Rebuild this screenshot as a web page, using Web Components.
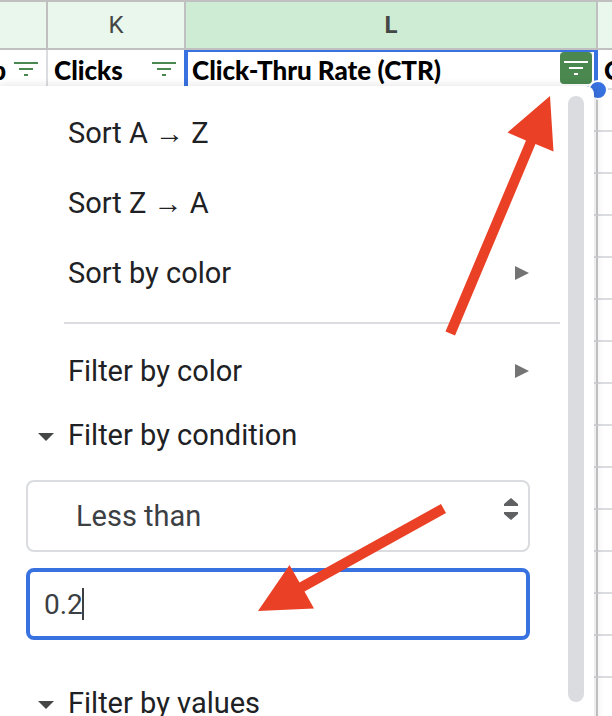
<!DOCTYPE html>
<html lang="en">
<head>
<meta charset="utf-8">
<title>Filter menu</title>
<style>
  body {
    margin: 0;
    background: #fff;
    font-family: Roboto, "Liberation Sans", sans-serif;
  }
  .arrow { font-family: "Liberation Serif", serif; }
</style>
</head>
<body>
<sheet-view>
  <filter-menu slot="menu">
    <menu-item>Sort A <span class="arrow">→</span> Z</menu-item>
    <menu-item>Sort Z <span class="arrow">→</span> A</menu-item>
    <menu-item submenu>Sort by color</menu-item>
    <menu-divider></menu-divider>
    <menu-item submenu>Filter by color</menu-item>
    <menu-section label="Filter by condition">
      <condition-select value="Less than"></condition-select>
      <condition-input value="0.2"></condition-input>
    </menu-section>
    <menu-section label="Filter by values"></menu-section>
  </filter-menu>
  <callout-arrows slot="callouts"></callout-arrows>
</sheet-view>

<script>
class FilterIcon extends HTMLElement {
  constructor() {
    super();
    this.attachShadow({ mode: 'open' });
  }

  connectedCallback() {
    this.shadowRoot.innerHTML = `
      <style>
        :host { display: block; color: #4a884f; }
        :host([active]) { color: #fff; }
        button {
          display: flex;
          align-items: center;
          justify-content: center;
          width: 32px;
          height: 32px;
          padding: 0;
          border: 0;
          border-radius: 4px;
          background: none;
          color: inherit;
        }
        :host([active]) button { background: #4a884f; }
      </style>
      <button type="button" aria-label="Filter column">
        <svg width="24" height="14" viewBox="0 0 24 14" fill="currentColor" shape-rendering="crispEdges">
          <rect width="24" height="2"/>
          <rect x="5" y="6" width="14" height="2"/>
          <rect x="10" y="12" width="4" height="2"/>
        </svg>
      </button>
    `;
  }
}

class SheetView extends HTMLElement {
  constructor() {
    super();
    this.attachShadow({ mode: 'open' });
  }

  connectedCallback() {
    const rows = Array.from({ length: 16 }, () => '<tr><td></td><td></td><td></td><td></td></tr>').join('');
    this.shadowRoot.innerHTML = `
      <style>
        :host {
          display: block;
          position: relative;
          height: 100vh;
          overflow: hidden;
        }
        table {
          width: 100%;
          table-layout: fixed;
          border-collapse: separate;
          border-spacing: 0;
          border-top: 2px solid #c0c0c0;
        }
        .j { width: 48px; }
        .k { width: 138px; }
        .m { width: 14px; }
        th, td {
          box-sizing: border-box;
          height: 42px;
          padding: 0;
          border-right: 2px solid #dadce0;
          border-bottom: 2px solid #dadce0;
        }
        td:nth-child(3) { border-right-color: #c8c8c8; }
        thead th {
          height: 48px;
          background: #e9f7ed;
          border-color: #c0c0c0;
          color: #444746;
          font-size: 24px;
          font-weight: 400;
        }
        thead th.current {
          background: #ceecd3;
          font-weight: 700;
        }
        tr > :last-child { border-right: 0; }
        .names td {
          position: relative;
          height: 40px;
        }
        .name {
          display: flex;
          align-items: center;
          justify-content: space-between;
          box-sizing: border-box;
          height: 38px;
          padding: 0 4px 0 6px;
          overflow: hidden;
          color: #000;
          font: 900 26px/32px Lato, "Liberation Sans", sans-serif;
          white-space: nowrap;
        }
        .name span { padding-top: 2px; }
        .cut {
          justify-content: flex-end;
          gap: 4px;
          padding-left: 0;
        }
        filter-icon[active] { padding-bottom: 2px; }
        td.current::after {
          content: "";
          position: absolute;
          inset: 0 -2px 0 -2px;
          border: solid #3871e0;
          border-width: 2px 4px;
          pointer-events: none;
        }
        .handle {
          position: absolute;
          z-index: 1;
          right: -12px;
          bottom: -12px;
          width: 16px;
          height: 16px;
          border: 2px solid #fff;
          border-radius: 50%;
          background: #3871e0;
        }
        ::slotted([slot="menu"]) {
          position: absolute;
          z-index: 2;
          top: 86px;
          left: 0;
          right: 18px;
        }
        ::slotted([slot="callouts"]) {
          position: absolute;
          z-index: 3;
          top: 96px;
          right: 58px;
        }
      </style>
      <table>
        <colgroup><col class="j"><col class="k"><col><col class="m"></colgroup>
        <thead>
          <tr><th></th><th>K</th><th class="current">L</th><th></th></tr>
        </thead>
        <tbody>
          <tr class="names">
            <td><div class="name cut"><span>p</span><filter-icon></filter-icon></div></td>
            <td><div class="name"><span>Clicks</span><filter-icon></filter-icon></div></td>
            <td class="current">
              <div class="name"><span>Click-Thru Rate (CTR)</span><filter-icon active></filter-icon></div>
              <span class="handle"></span>
            </td>
            <td><div class="name"><span>C</span></div></td>
          </tr>
          ${rows}
        </tbody>
      </table>
      <slot name="menu"></slot>
      <slot name="callouts"></slot>
    `;
  }
}

class FilterMenu extends HTMLElement {
  constructor() {
    super();
    this.attachShadow({ mode: 'open' });
  }

  connectedCallback() {
    this.shadowRoot.innerHTML = `
      <style>
        :host {
          display: grid;
          grid-template-columns: 1fr 16px;
          gap: 8px;
          box-sizing: border-box;
          padding-right: 10px;
          border-radius: 0 8px 0 0;
          background: #fff;
          box-shadow: 0 2px 10px 2px rgba(0, 0, 0, 0.12);
        }
        .items { padding-top: 12px; }
        .thumb {
          margin: 10px 0 30px;
          border-radius: 8px;
          background: #dadce0;
        }
      </style>
      <div class="items"><slot></slot></div>
      <div class="thumb"></div>
    `;
  }
}

class MenuItem extends HTMLElement {
  constructor() {
    super();
    this.attachShadow({ mode: 'open' });
  }

  connectedCallback() {
    const arrow = this.hasAttribute('submenu')
      ? '<svg width="14" height="14" viewBox="0 0 14 14"><path d="M0 0L14 7L0 14Z" fill="#747474"/></svg>'
      : '';
    this.shadowRoot.innerHTML = `
      <style>
        :host { display: block; }
        button {
          display: flex;
          align-items: center;
          justify-content: space-between;
          width: 100%;
          height: 70px;
          padding: 0 31px 0 68px;
          border: 0;
          background: none;
          color: #202124;
          font: 400 29px/32px Roboto, "Liberation Sans", sans-serif;
        }
      </style>
      <button type="button"><span><slot></slot></span>${arrow}</button>
    `;
  }
}

class MenuDivider extends HTMLElement {
  constructor() {
    super();
    this.attachShadow({ mode: 'open' });
  }

  connectedCallback() {
    this.shadowRoot.innerHTML = `
      <style>
        :host { display: block; padding: 14px 0 12px 64px; }
        hr { height: 2px; margin: 0; border: 0; background: #dadce0; }
      </style>
      <hr>
    `;
  }
}

class MenuSection extends HTMLElement {
  constructor() {
    super();
    this.attachShadow({ mode: 'open' });
  }

  connectedCallback() {
    const label = this.getAttribute('label') || '';
    this.shadowRoot.innerHTML = `
      <style>
        :host { display: block; }
        button {
          display: flex;
          align-items: center;
          gap: 14px;
          width: 100%;
          height: 58px;
          padding: 0 0 0 38px;
          border: 0;
          background: none;
          color: #202124;
          font: 400 29px/32px Roboto, "Liberation Sans", sans-serif;
        }
        svg { margin-top: 4px; }
        .fields {
          display: flex;
          flex-direction: column;
          gap: 16px;
          padding: 16px 30px 34px 26px;
        }
      </style>
      <button type="button" aria-expanded="true">
        <svg width="16" height="8" viewBox="0 0 16 8"><path d="M0 0H16L8 8Z" fill="#444746"/></svg>
        ${label}
      </button>
      ${this.children.length ? '<div class="fields"><slot></slot></div>' : ''}
    `;
  }
}

class ConditionSelect extends HTMLElement {
  constructor() {
    super();
    this.attachShadow({ mode: 'open' });
  }

  connectedCallback() {
    this.shadowRoot.innerHTML = `
      <style>
        :host { display: grid; align-items: center; }
        select, svg { grid-area: 1 / 1; }
        select {
          appearance: none;
          box-sizing: border-box;
          width: 100%;
          height: 72px;
          margin: 0;
          padding: 0 48px;
          border: 2px solid #dadce0;
          border-radius: 8px;
          background: #fff;
          color: #3c4043;
          font: 400 29px/32px Roboto, "Liberation Sans", sans-serif;
        }
        svg {
          justify-self: end;
          margin: 0 12px 14px 0;
          pointer-events: none;
        }
      </style>
      <select aria-label="Condition"><option>${this.getAttribute('value')}</option></select>
      <svg width="14" height="22" viewBox="0 0 14 22" fill="#5f6163">
        <path d="M7 0L14 6V8H0V6ZM0 14H14V16L7 22L0 16Z"/>
      </svg>
    `;
  }
}

class ConditionInput extends HTMLElement {
  constructor() {
    super();
    this.attachShadow({ mode: 'open' });
  }

  connectedCallback() {
    this.shadowRoot.innerHTML = `
      <style>
        :host { display: block; }
        input {
          display: block;
          box-sizing: border-box;
          width: 100%;
          height: 72px;
          margin: 0;
          padding: 0 14px;
          border: 4px solid #3871e0;
          border-radius: 8px;
          outline: 0;
          /* text cursor after the value */
          background: linear-gradient(#3c4043, #3c4043) 52px 50% / 2px 32px no-repeat #fff;
          caret-color: transparent;
          color: #3c4043;
          font: 400 28px/32px Roboto, "Liberation Sans", sans-serif;
        }
      </style>
      <input type="text" aria-label="Value" value="${this.getAttribute('value')}">
    `;
  }
}

class CalloutArrows extends HTMLElement {
  constructor() {
    super();
    this.attachShadow({ mode: 'open' });
  }

  connectedCallback() {
    this.shadowRoot.innerHTML = `
      <style>
        :host { display: block; pointer-events: none; }
        svg { display: block; }
      </style>
      <svg width="296" height="516" viewBox="258 96 296 516" fill="#ea4126">
        <path d="M550 96L553.500 151.500L535.500 144L455 335.500L445.500 331.500L526 140.500L507.500 132.500Z"/>
        <path d="M258 611L289.500 565L299.500 582.500L441 504L446 513L304.500 591.500L314 608.500Z"/>
      </svg>
    `;
  }
}

customElements.define('filter-icon', FilterIcon);
customElements.define('sheet-view', SheetView);
customElements.define('filter-menu', FilterMenu);
customElements.define('menu-item', MenuItem);
customElements.define('menu-divider', MenuDivider);
customElements.define('menu-section', MenuSection);
customElements.define('condition-select', ConditionSelect);
customElements.define('condition-input', ConditionInput);
customElements.define('callout-arrows', CalloutArrows);
</script>
</body>
</html>
